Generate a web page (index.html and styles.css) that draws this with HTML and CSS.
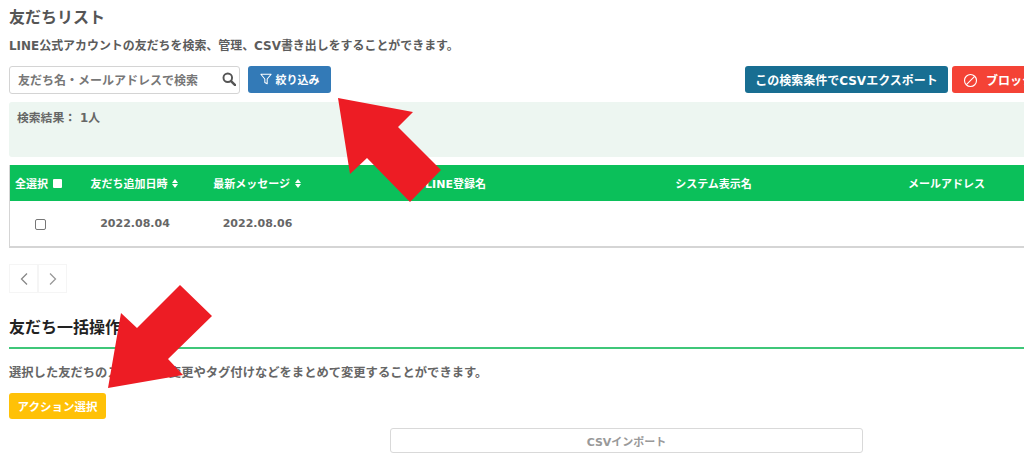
FILE: index.html
```html
<!DOCTYPE html>
<html lang="ja">
<head>
<meta charset="utf-8">
<title>友だちリスト</title>
<link rel="stylesheet" href="styles.css">
</head>
<body>
<main class="page">
  <h1 class="title">友だちリスト</h1>
  <p class="lead">LINE公式アカウントの友だちを検索、管理、CSV書き出しをすることができます。</p>
  <div class="toolbar">
    <div class="search">
      <span class="search-text">友だち名・メールアドレスで検索</span>
      <svg class="search-icon" viewBox="0 0 16 16" width="14" height="14"><circle cx="6.6" cy="6.6" r="4.9" fill="none" stroke="#555" stroke-width="2.2"/><path d="M10.3 10.3 15 15" stroke="#555" stroke-width="2.8" stroke-linecap="round"/></svg>
    </div>
    <button class="btn btn-blue">
      <svg viewBox="0 0 14 14" width="12" height="12"><path d="M1 1.5h12L8.4 7v5.5L5.600 11V7z" fill="none" stroke="#fff" stroke-width="1.2" stroke-linejoin="round"/></svg>
      絞り込み
    </button>
    <div class="toolbar-right">
      <button class="btn btn-teal">この検索条件でCSVエクスポート</button>
      <button class="btn btn-red">
        <svg class="ban" viewBox="0 0 16 16" width="15" height="15"><circle cx="8" cy="8" r="6.4" fill="none" stroke="#fff" stroke-width="1.2"/><path d="M3.6 12.4 12.4 3.6" stroke="#fff" stroke-width="1.2"/></svg>
        ブロック
      </button>
    </div>
  </div>
  <div class="result">検索結果： 1人</div>
  <table class="friends">
    <colgroup><col class="c1"><col class="c2"><col class="c3"><col class="c4"><col class="c5"><col class="c6"></colgroup>
    <thead>
      <tr>
        <th class="th-all">全選択 <span class="white-box"></span></th>
        <th>友だち追加日時 <span class="sort"></span></th>
        <th>最新メッセージ <span class="sort"></span></th>
        <th>LINE登録名</th>
        <th>システム表示名</th>
        <th>メールアドレス</th>
      </tr>
    </thead>
    <tbody>
      <tr>
        <td><span class="check"></span></td>
        <td>2022.08.04</td>
        <td>2022.08.06</td>
        <td></td><td></td><td></td>
      </tr>
    </tbody>
  </table>
  <nav class="pager">
    <span class="pager-item"><svg viewBox="0 0 10 14" width="10" height="14"><path d="M8 1.5 2.5 7 8 12.500" fill="none" stroke="#888" stroke-width="1.300"/></svg></span>
    <span class="pager-item"><svg viewBox="0 0 10 14" width="10" height="14"><path d="M2 1.5 7.500 7 2 12.500" fill="none" stroke="#999" stroke-width="1.300"/></svg></span>
  </nav>
  <h2 class="section-title">友だち一括操作</h2>
  <p class="section-lead">選択した友だちのステータス変更やタグ付けなどをまとめて変更することができます。</p>
  <button class="btn btn-yellow">アクション選択</button>
  <div class="import-row"><div class="import">CSVインポート</div></div>
</main>
<svg class="arrows" viewBox="0 0 1024 475" width="1024" height="475">
  <polygon fill="#ed1c24" points="338,98 413,112 398,127 441,170 410,202 367,158 350,174"/>
  <polygon fill="#ed1c24" points="108,388 183,375 168,359 212,316 180,285 137,328 121,313"/>
</svg>
</body>
</html>
```
FILE: styles.css
```css
html, body { margin: 0; padding: 0; background: #fff; }
body { width: 1024px; height: 475px; overflow: hidden; position: relative; }
.page {
  width: 1060px;
  padding: 8px 0 0 9px;
  box-sizing: border-box;
  font-family: "DejaVu Sans", "Noto Sans CJK JP", sans-serif;
  color: #555;
}
.title { margin: 0; font-size: 16px; line-height: 20px; font-weight: 700; color: #555; }
.lead { margin: 9px 0 0; font-size: 11.95px; line-height: 18px; font-weight: 700; color: #5c5c5c; }
.toolbar { display: flex; align-items: flex-start; margin-top: 11px; gap: 8px; width: 1042px; }
.search {
  width: 231px; height: 28px; box-sizing: border-box;
  border: 1px solid #d4d4d4; border-radius: 3px;
  display: flex; align-items: center; justify-content: space-between;
  padding: 0 3px 0 8px;
}
.search-text { font-size: 12px; font-weight: 700; color: #777; margin-bottom: 2px; }
.search-icon { margin-top: -3px; }
.btn {
  height: 27px; box-sizing: border-box; border: 0; border-radius: 3px;
  font-family: inherit; font-size: 11px; font-weight: 700; color: #fff;
  display: inline-flex; align-items: center; justify-content: center; gap: 4px; padding: 0 0 1px;
}
.btn-blue { width: 83px; background: #337ab7; }
.btn-teal { width: 203px; background: #186e92; font-size: 12px; }
.btn-red { width: 99px; background: #f44336; gap: 8px; font-size: 12px; justify-content: flex-start; padding-left: 11px; }
.ban { margin-top: 2px; }
.toolbar-right { margin-left: auto; display: flex; gap: 4px; }
.result {
  margin-top: 8px; height: 55px; box-sizing: border-box;
  background: #edf6f1; border-radius: 3px 0 0 3px;
  padding: 8px 8px; font-size: 11.8px; line-height: 16px; font-weight: 700; color: #666;
}
.friends {
  margin-top: 8px; width: 1051px; table-layout: fixed; border-collapse: collapse;
  border-left: 1px solid #d5d5d5; border-bottom: 2px solid #d5d5d5;
}
.c1 { width: 62px; } .c2 { width: 127px; } .c3 { width: 118px; }
.c4 { width: 278px; } .c5 { width: 238px; } .c6 { width: 228px; }
.friends th {
  height: 36px; padding: 0; background: #0bc05a; color: #fff;
  font-size: 11px; font-weight: 700; text-align: center; white-space: nowrap;
}
.friends .th-all { text-align: left; padding-left: 5px; }
.friends td { height: 45px; padding: 0; text-align: center; font-size: 11px; font-weight: 700; color: #666; }
.white-box { display: inline-block; width: 9px; height: 9px; background: #fff; border-radius: 1px; margin-left: 1px; }
.sort { display: inline-block; width: 7px; height: 9px; margin-left: 1px; position: relative; }
.sort::before, .sort::after {
  content: ""; position: absolute; left: 0; border-left: 3.5px solid transparent; border-right: 3.5px solid transparent;
}
.sort::before { top: 0; border-bottom: 4px solid #fff; }
.sort::after { bottom: 0; border-top: 4px solid #fff; }
.check { display: inline-block; width: 9px; height: 9px; border: 1px solid #777; border-radius: 2px; vertical-align: middle; }
.pager { display: flex; margin-top: 16px; }
.pager-item {
  width: 29px; height: 29px; box-sizing: border-box; border: 1px solid #f5f5f5;
  display: flex; align-items: center; justify-content: center;
}
.section-title { margin: 25px 0 0; font-size: 16px; line-height: 20px; font-weight: 700; color: #222; }
.section-lead {
  margin: 9px 0 0; padding-top: 15px; border-top: 2px solid #3fc779;
  font-size: 12.3px; line-height: 18px; font-weight: 700; color: #666;
}
.btn-yellow { width: 97px; height: 26px; background: #ffc107; margin-top: 11px; font-size: 11.5px; }
.import-row { margin-top: 9px; padding-left: 381px; }
.import {
  width: 473px; height: 25px; box-sizing: border-box; border: 1px solid #d9d9d9; border-radius: 3px;
  display: flex; align-items: center; justify-content: center;
  font-size: 11px; font-weight: 700; color: #999;
}
.arrows { position: absolute; left: 0; top: 0; pointer-events: none; }
```
